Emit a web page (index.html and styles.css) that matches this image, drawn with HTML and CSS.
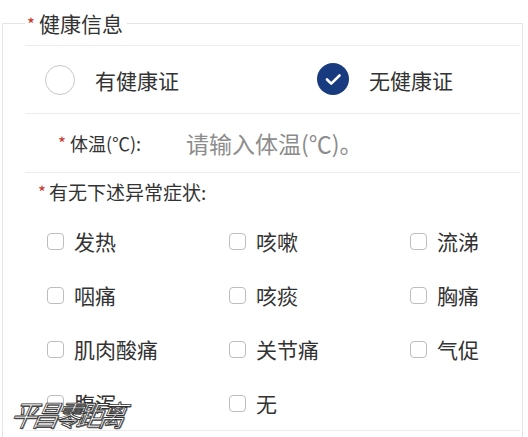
FILE: index.html
```html
<!DOCTYPE html>
<html lang="zh-CN">
<head>
    <meta charset="UTF-8">
    <meta name="viewport" content="width=device-width, initial-scale=1.0">
    <title>健康信息</title>
    <link rel="stylesheet" href="styles.css">
</head>
<body>
    <fieldset class="card">
        <legend><span class="req">*</span>健康信息</legend>

        <div class="row radios">
            <label class="radio"><span class="dot"></span>有健康证</label>
            <label class="radio"><span class="dot checked">
                <svg viewBox="0 0 32 32" width="32" height="32"><path d="M10 16.5l4.2 4.2L22.5 12.5" fill="none" stroke="#fff" stroke-width="2.6" stroke-linecap="round" stroke-linejoin="round"/></svg>
            </span>无健康证</label>
        </div>

        <div class="row temp">
            <span class="temp-label"><span class="req">*</span>体温(℃):</span>
            <input type="text" class="temp-input" placeholder="请输入体温(℃)。">
        </div>

        <div class="row symptoms">
            <div class="sym-title"><span class="req">*</span>有无下述异常症状:</div>
            <div class="sym-grid">
                <label class="check"><span class="box"></span>发热</label>
                <label class="check"><span class="box"></span>咳嗽</label>
                <label class="check"><span class="box"></span>流涕</label>
                <label class="check"><span class="box"></span>咽痛</label>
                <label class="check"><span class="box"></span>咳痰</label>
                <label class="check"><span class="box"></span>胸痛</label>
                <label class="check"><span class="box"></span>肌肉酸痛</label>
                <label class="check"><span class="box"></span>关节痛</label>
                <label class="check"><span class="box"></span>气促</label>
                <label class="check"><span class="box"></span>腹泻</label>
                <label class="check"><span class="box"></span>无</label>
            </div>
        </div>
        <div class="row end"></div>
    </fieldset>

    <div class="watermark">平昌零距离</div>
</body>
</html>
```

FILE: styles.css
```css
body {
    margin: 0;
    background: #fff;
    font-family: "Noto Sans CJK SC", "Noto Sans", sans-serif;
    color: #333;
    position: relative;
    height: 437px;
    overflow: hidden;
}
.card {
    margin: 9px 5px 0 2px;
    padding: 0 2px 0 22px;
    border: 1px solid #e4e4e4;
    min-width: 0;
}
.card legend {
    margin-left: 0;
    padding: 0 4px 0 2px;
    font-size: 21px;
    line-height: 28px;
    color: #333;
}
.req {
    color: #c8372d;
    font-size: 17px;
    margin-right: 4px;
    vertical-align: 1px;
}
.row {
    border-top: 1px solid #ececec;
}
.radios {
    margin-top: 7px;
    height: 67px;
    display: grid;
    grid-template-columns: 272px 1fr;
    align-items: center;
    padding-left: 20px;
}
.radio {
    display: flex;
    align-items: center;
    gap: 20px;
    font-size: 21px;
}
.dot {
    width: 28px;
    height: 28px;
    border: 1.5px solid #c8c8c8;
    border-radius: 50%;
    display: flex;
    align-items: center;
    justify-content: center;
}
.dot.checked {
    width: 32px;
    height: 32px;
    margin: -2px 0 0 0;
    border: none;
    background: #183b7f;
}
.temp {
    height: 58px;
    display: flex;
    align-items: center;
    padding-left: 33px;
}
.temp-label {
    font-size: 18px;
    width: 128px;
}
.temp-input {
    border: none;
    outline: none;
    font-family: inherit;
    font-size: 23px;
    padding: 0;
    width: 300px;
    background: transparent;
}
.temp-input::placeholder {
    color: #8c8c8c;
}
.sym-title {
    font-size: 19px;
    padding: 6px 0 10px 13px;
    line-height: 25px;
}
.sym-title .req {
    margin-right: 3px;
}
.sym-grid {
    display: grid;
    grid-template-columns: 182px 181px 1fr;
    grid-auto-rows: 54px;
    padding-left: 22px;
}
.check {
    display: flex;
    align-items: center;
    gap: 10px;
    font-size: 21px;
}
.box {
    width: 15px;
    height: 15px;
    border: 1.5px solid #bdbdbd;
    border-radius: 4px;
}
.end {
    height: 20px;
}
.watermark {
    position: absolute;
    left: 12px;
    top: 395px;
    font-size: 26px;
    font-style: italic;
    letter-spacing: -4px;
    color: #fff;
    -webkit-text-stroke: 0.8px #333;
    transform: skewX(-12deg) scaleY(1.1);
    text-shadow: 1px 1px 0 #666;
}
```
